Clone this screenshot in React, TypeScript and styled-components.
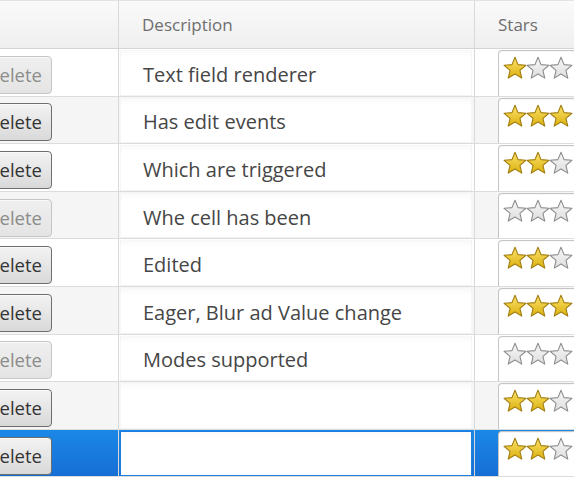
import React from "react";
import styled, { createGlobalStyle, css } from "styled-components";

const Global = createGlobalStyle`
  html, body { margin: 0; padding: 0; background: #fff; }
  body { font-family: "Open Sans", "DejaVu Sans", sans-serif; overflow: hidden; }
`;

type Row = { desc: string; stars: number; disabled?: boolean };

const rows: Row[] = [
  { desc: "Text field renderer", stars: 1, disabled: true },
  { desc: "Has edit events", stars: 3 },
  { desc: "Which are triggered", stars: 2 },
  { desc: "Whe cell has been", stars: 0, disabled: true },
  { desc: "Edited", stars: 2 },
  { desc: "Eager, Blur ad Value change", stars: 3 },
  { desc: "Modes supported", stars: 0, disabled: true },
  { desc: "", stars: 2 },
  { desc: "", stars: 2 },
];

const Grid = styled.div`
  width: 574px;
  height: 481px;
  overflow: hidden;
  border-top: 1px solid #e3e3e3;
  box-sizing: border-box;
`;

const cols = css`
  display: grid;
  grid-template-columns: 119px 356px 1fr;
`;

const HeaderRow = styled.div`
  ${cols};
  height: 48px;
  box-sizing: border-box;
  background: linear-gradient(to bottom, #fafafa, #efefef);
  border-bottom: 1px solid #d4d4d4;
`;

const HeaderCell = styled.div<{ $last?: boolean }>`
  display: flex;
  align-items: center;
  padding-left: 23px;
  border-right: ${(p) => (p.$last ? "none" : "1px solid #d9d9d9")};
  color: #6e6e6e;
  font-size: 17px;
  font-weight: 400;
  white-space: nowrap;
  overflow: hidden;
`;

const BodyRow = styled.div<{ $stripe: boolean; $selected: boolean }>`
  ${cols};
  height: 47.6px;
  box-sizing: border-box;
  border-bottom: 1px solid #dcdcdc;
  background: ${(p) =>
    p.$selected
      ? "linear-gradient(to bottom, #1b88e6, #166ed5)"
      : p.$stripe
      ? "#f5f5f5"
      : "#fff"};
`;

const ActionCell = styled.div`
  display: flex;
  align-items: center;
  justify-content: flex-end;
  padding-right: 66px;
  padding-top: 5px;
  border-right: 1px solid #d9d9d9;
  overflow: hidden;
`;

const DeleteButton = styled.button<{ $disabled?: boolean }>`
  flex: none;
  height: 38px;
  padding: 0 9px 1px 14px;
  border-radius: 4px;
  font-family: "Open Sans", "DejaVu Sans", sans-serif;
  font-size: 18.5px;
  border: 1px solid ${(p) => (p.$disabled ? "#c6c6c6" : "#6e6e6e")};
  color: ${(p) => (p.$disabled ? "#8c8c8c" : "#333")};
  background: ${(p) =>
    p.$disabled
      ? "linear-gradient(to bottom, #efefef, #e4e4e4)"
      : "linear-gradient(to bottom, #f3f3f3, #d9d9d9)"};
  box-shadow: inset 0 1px 0 rgba(255, 255, 255, 0.6);
`;

const DescCell = styled.div`
  display: flex;
  padding: 1px 2px 0 1px;
  border-right: 1px solid #d9d9d9;
  min-width: 0;
`;

const TextField = styled.div<{ $focused: boolean }>`
  flex: 1;
  display: flex;
  align-items: center;
  box-sizing: border-box;
  padding: 3px 0 0 22px;
  background: linear-gradient(to bottom, #fafafa, #fff 6px);
  border: 1px solid ${(p) => (p.$focused ? "#197de1" : "rgba(0,0,0,0.03)")};
  color: #464646;
  font-size: 20px;
  white-space: nowrap;
  overflow: hidden;
`;

const StarsCell = styled.div`
  display: flex;
  padding: 1px 0 0 23px;
  overflow: hidden;
`;

const StarsBox = styled.div`
  flex: 1;
  display: flex;
  align-items: flex-start;
  padding: 5px 0 0 4px;
  background: #fff;
  border: 1px solid #c5c5c5;
  border-right: none;
  border-bottom: none;
  border-top-left-radius: 4px;
  box-shadow: inset 0 1px 0 rgba(0, 0, 0, 0.03);
`;

const StarSvg = styled.svg`
  flex: none;
  width: 24px;
  height: 24px;
  margin-right: -1px;
`;

const STAR =
  "12,1.3 15.06,8.59 22.94,9.25 16.95,14.41 18.76,22.1 12,18 5.24,22.1 7.05,14.41 1.06,9.25 8.94,8.59";

function Star({ on }: { on: boolean }) {
  const id = on ? "gOn" : "gOff";
  return (
    <StarSvg viewBox="0 0 24 24">
      <polygon
        points={STAR}
        fill={`url(#${id})`}
        stroke={on ? "#a07d10" : "#8d8d8d"}
        strokeWidth={1.1}
        strokeLinejoin="round"
      />
    </StarSvg>
  );
}

function Defs() {
  return (
    <svg width="0" height="0" style={{ position: "absolute" }}>
      <defs>
        <linearGradient id="gOn" x1="0" y1="0" x2="0" y2="1">
          <stop offset="0" stopColor="#fbe26a" />
          <stop offset="1" stopColor="#dcb10f" />
        </linearGradient>
        <linearGradient id="gOff" x1="0" y1="0" x2="0" y2="1">
          <stop offset="0" stopColor="#f7f7f7" />
          <stop offset="1" stopColor="#dedede" />
        </linearGradient>
      </defs>
    </svg>
  );
}

export default function App() {
  return (
    <>
      <Global />
      <Defs />
      <Grid>
        <HeaderRow>
          <HeaderCell />
          <HeaderCell>Description</HeaderCell>
          <HeaderCell $last>Stars</HeaderCell>
        </HeaderRow>
        {rows.map((r, i) => {
          const selected = i === rows.length - 1;
          return (
            <BodyRow key={i} $stripe={i % 2 === 1} $selected={selected}>
              <ActionCell>
                <DeleteButton $disabled={r.disabled}>Delete</DeleteButton>
              </ActionCell>
              <DescCell>
                <TextField $focused={selected}>{r.desc}</TextField>
              </DescCell>
              <StarsCell>
                <StarsBox>
                  {[0, 1, 2].map((s) => (
                    <Star key={s} on={s < r.stars} />
                  ))}
                </StarsBox>
              </StarsCell>
            </BodyRow>
          );
        })}
      </Grid>
    </>
  );
}
